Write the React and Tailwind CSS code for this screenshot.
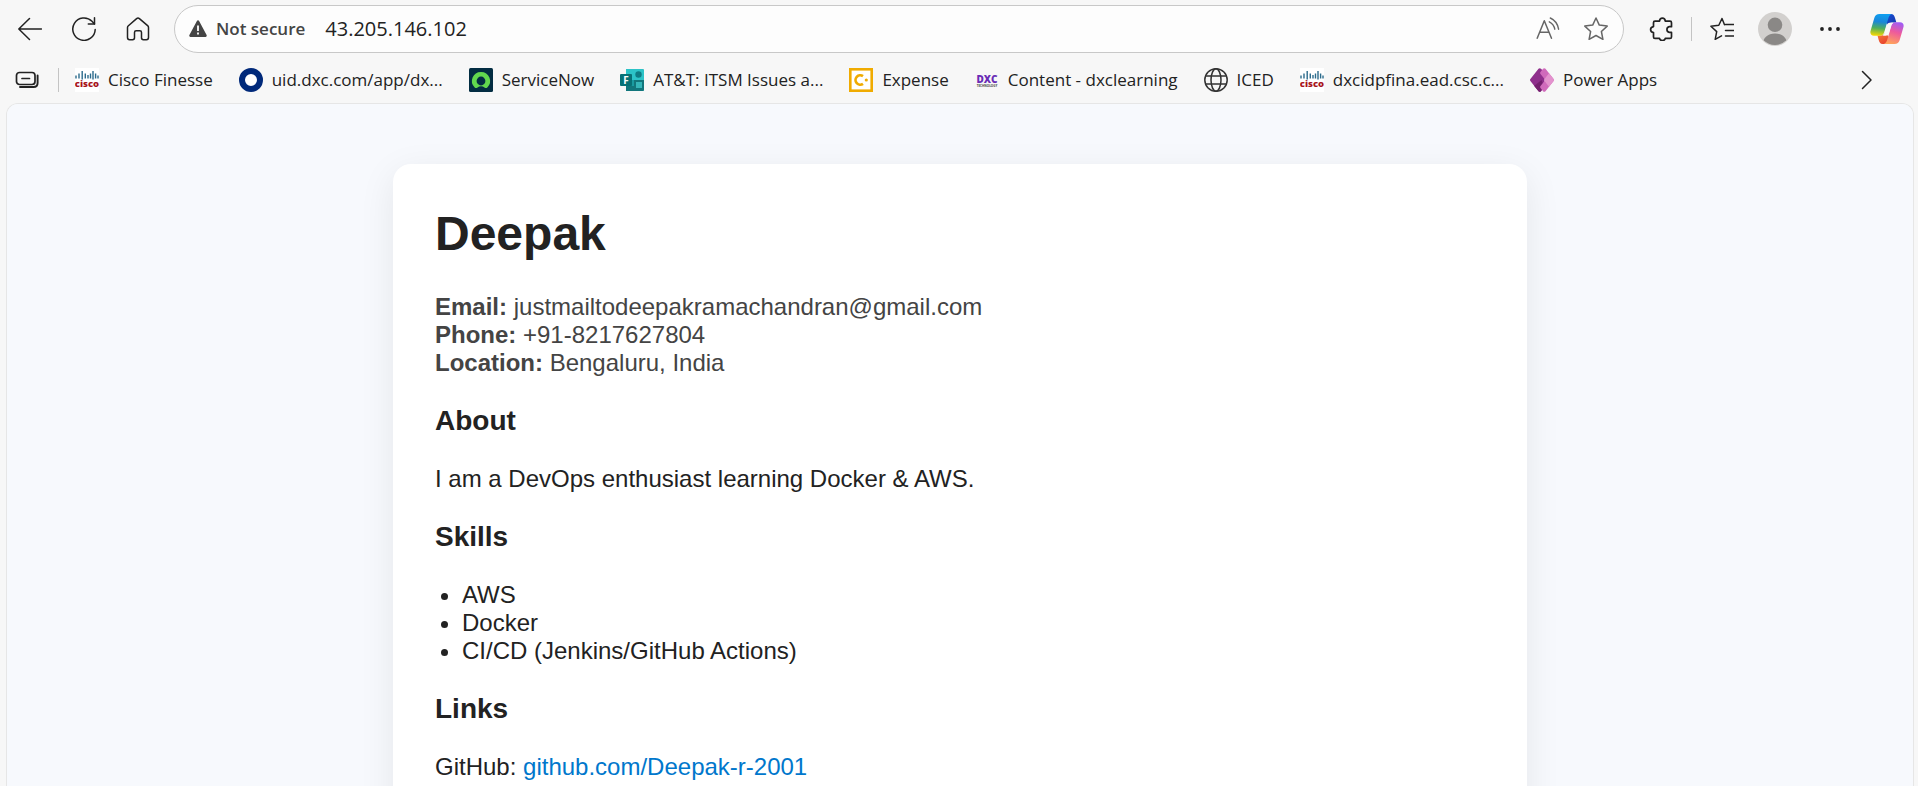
const chromeStroke = { fill: "none", stroke: "currentColor", strokeWidth: 1.5, strokeLinecap: "round", strokeLinejoin: "round" };

function BackIcon() {
  return (
    <svg viewBox="0 0 24 24" className="size-6" {...chromeStroke}>
      <path d="M23.5 12H.8M11.5 1.5.8 12l10.7 10.5" />
    </svg>
  );
}

function ReloadIcon() {
  return (
    <svg viewBox="0 0 24 24" className="size-6" {...chromeStroke}>
      <path d="M23.2 12.5A11.2 11.2 0 1 1 20 4.3L22.5 6.9" />
      <path d="M22.5.8v6.1h-6.2" />
    </svg>
  );
}

function HomeIcon() {
  return (
    <svg viewBox="0 0 24 24" className="size-6" {...chromeStroke}>
      <path d="M10.6 1.6 2.4 8.7c-.6.5-.9 1.2-.9 1.9v10c0 1.2.9 2.1 2.1 2.1h3c1.1 0 1.9-.8 1.9-1.9v-5.3c0-1 .7-1.7 1.7-1.7h3.6c1 0 1.7.7 1.7 1.7v5.3c0 1.1.8 1.9 1.9 1.9h3c1.2 0 2.1-.9 2.1-2.1v-10c0-.7-.3-1.4-.9-1.9l-8.2-7.1a2.1 2.1 0 0 0-2.8 0Z" />
    </svg>
  );
}

function WarningIcon() {
  return (
    <svg viewBox="0 0 18 18" className="size-[18px]">
      <path d="M7.9.9a1.25 1.25 0 0 1 2.2 0l7.5 14.2a1.2 1.2 0 0 1-1.1 1.8h-15a1.2 1.2 0 0 1-1.1-1.8Z" fill="#444" />
      <path d="M8.1 5.500h1.8v5.500H8.1zM8.100 12.500h1.8v1.900H8.100z" fill="#fff" />
    </svg>
  );
}

function ReadAloudIcon() {
  return (
    <svg viewBox="0 0 24 24" className="size-6" {...chromeStroke}>
      <path d="M1.2 21.200 8.300 3.800l7.200 17.400M3.700 15.300h9.200" />
      <path d="M13.300 4.800c3 1.500 4.900 4 5.500 7.400M14.300 1c4.700 2.200 7.500 6 8.300 11.200" strokeWidth="1.400" />
    </svg>
  );
}

function StarIcon() {
  return (
    <svg viewBox="0 0 24 24" className="size-6" {...chromeStroke}>
      <path d="m12 1 3.300 7.100 7.900 1-5.800 5.400 1.500 7.800L12 18.500l-6.900 3.800 1.500-7.800L.8 9.100l7.900-1Z" />
    </svg>
  );
}

function ExtensionIcon() {
  return (
    <svg viewBox="0 0 24 24" className="size-6" {...chromeStroke} strokeWidth="1.700">
      <path d="M6 4.200h4.500c.2-1.900 1.300-3 2.900-3s2.700 1.100 2.900 3h4.700c.9 0 1.500.6 1.500 1.500v4h-2.200a2.900 2.900 0 0 0 0 5.700h2.200v4.500c0 .9-.6 1.500-1.500 1.500h-4.700c-.2 1.200-1.300 2.100-2.900 2.100s-2.700-.9-2.900-2.100H6c-.9 0-1.500-.6-1.500-1.500v-4.300c-1.800-.2-2.900-1.300-2.900-3s1.100-2.800 2.900-3V5.700c0-.9.6-1.500 1.500-1.500Z" />
    </svg>
  );
}

function FavoritesIcon() {
  return (
    <svg viewBox="0 0 24 24" className="size-6" {...chromeStroke}>
      <path d="M14.500 7.700 12 1.500 8.800 8.200l-7.900 1 5.800 5.400-1.500 7.700 6.300-3.400M15.500 7.500H24M15.500 13.500H24M15.500 19H24" />
    </svg>
  );
}

function ProfileIcon() {
  return (
    <svg viewBox="0 0 34 34" className="size-[34px]">
      <defs>
        <clipPath id="avatar"><circle cx="17" cy="17" r="16" /></clipPath>
      </defs>
      <circle cx="17" cy="17" r="17" fill="#d2d0ce" />
      <g clipPath="url(#avatar)" fill="#8a8886">
        <circle cx="17" cy="12.800" r="7.300" />
        <path d="M4.500 34c0-8 5-12.500 12.500-12.500S29.500 26 29.500 34Z" />
      </g>
    </svg>
  );
}

function CopilotIcon() {
  return (
    <svg viewBox="0 0 34 32" className="h-8 w-[34px]">
      <defs>
        <linearGradient id="cpA" x1="0.400" y1="0" x2="0.300" y2="1">
          <stop offset="0" stopColor="#0f9ff0" /><stop offset=".35" stopColor="#1b86d8" /><stop offset=".65" stopColor="#4fae5c" /><stop offset="1" stopColor="#f7d800" />
        </linearGradient>
        <linearGradient id="cpB" x1="0.700" y1="0" x2="0.400" y2="1">
          <stop offset="0" stopColor="#a05cf5" /><stop offset=".45" stopColor="#ee5a9c" /><stop offset="1" stopColor="#ffa35c" />
        </linearGradient>
        <linearGradient id="cpC" x1="0" y1="0" x2="1" y2="1">
          <stop offset="0" stopColor="#1c50d8" /><stop offset="1" stopColor="#1236a8" />
        </linearGradient>
        <linearGradient id="cpD" x1="0" y1="0" x2="0.500" y2="1">
          <stop offset="0" stopColor="#f9803c" /><stop offset="1" stopColor="#e8442e" />
        </linearGradient>
      </defs>
      <path d="M16 1h5c2.300 0 3.300 1.600 4 4l1.400 4.500h-4.600c-2 0-3.200 1-3.900 3L15 8Z" fill="url(#cpC)" />
      <path d="M17.500 31h-5c-2.300 0-3.200-1.700-3.800-4l-1.200-4.500H11c2 0 3.200-1 3.900-3L19 24Z" fill="url(#cpD)" />
      <path d="M9.500 1h12.300c-2 .8-2.900 2.400-3.500 4.500l-4 13.500c-.7 2.400-2 3.700-4.600 3.700H4c-3 0-4.200-2.200-3.400-5L4.300 5C5.100 2.300 6.700 1 9.500 1Z" fill="url(#cpA)" />
      <path d="M24.500 31H13.800c2-.8 2.900-2.400 3.500-4.500l4-13.500c.7-2.400 2-3.700 4.600-3.700H30c3 0 4.200 2.200 3.400 5L29.700 27c-.8 2.700-2.400 4-5.200 4Z" fill="url(#cpB)" />
      <path d="M19.600 9.700h3.700c-1.300.8-1.900 1.900-2.300 3.300l-2 6.700c-.6 2-1.700 3-3.500 3h-3.200c1.300-.8 1.900-1.900 2.300-3.300l2-6.700c.6-2 1.500-3 3-3Z" fill="#f9f7f7" />
    </svg>
  );
}

function WorkspacesIcon() {
  return (
    <svg viewBox="0 0 24 24" className="size-6" fill="none" stroke="#222" strokeLinecap="round" strokeLinejoin="round">
      <rect x="1.500" y="4.500" width="18.500" height="12" rx="3" strokeWidth="1.700" />
      <path d="M7 10.500h7.500" strokeWidth="1.700" />
      <path d="M22.600 7.500v7.500c0 2.500-1.600 4-4 4H5" strokeWidth="1.900" />
    </svg>
  );
}

function CiscoIcon() {
  return (
    <svg viewBox="0 0 24 24" className="size-6" aria-hidden="true">
      <rect width="24" height="24" fill="#fff" />
      <path d="M1 7.500v3M4 5.500v5M7.200 3v8.500M10.300 5.500v5M13 7v3.500M15.500 5.500v5M18 3v8.500M20.600 5.500v5M23 7.500v3" stroke="#2b6b8c" strokeWidth="1.400" />
      <text x="12" y="19.300" textAnchor="middle" fontSize="9.500" fontWeight="800" fill="#a8141c" fontFamily="Open Sans, sans-serif">cisco</text>
    </svg>
  );
}

function RingIcon() {
  return (
    <svg viewBox="0 0 24 24" className="size-6">
      <circle cx="12" cy="12" r="9" fill="#fff" stroke="#00297a" strokeWidth="6" />
    </svg>
  );
}

function ServiceNowIcon() {
  return (
    <svg viewBox="0 0 24 24" className="size-6">
      <rect width="24" height="24" rx="1.500" fill="#032d42" />
      <path d="M12 4a9 9 0 0 0-6.300 15.500c.7.700 1.700.7 2.500.2a6.300 6.300 0 0 1 7.600 0c.8.500 1.800.5 2.500-.2A9 9 0 0 0 12 4Z" fill="#62d84e" />
      <circle cx="12" cy="13" r="4.400" fill="#032d42" />
    </svg>
  );
}

function FormsIcon() {
  return (
    <svg viewBox="0 0 24 24" className="size-6" aria-hidden="true">
      <rect x="6" y="1" width="18" height="22" rx="1.500" fill="#1a9ba1" />
      <path d="M6 1h16.500A1.500 1.500 0 0 1 24 2.500V12H6Z" fill="#2cc3c7" />
      <path d="M14 12h10v9.500a1.500 1.500 0 0 1-1.500 1.500H6v-5h8Z" fill="#12767c" />
      <circle cx="18.500" cy="6.500" r="3.200" fill="#0f7c84" />
      <rect x="16" y="14" width="6" height="6" fill="#35b6b9" />
      <rect y="6" width="12" height="12" rx="1" fill="#077176" />
      <text x="6" y="15.500" textAnchor="middle" fontSize="10" fontWeight="700" fill="#fff" fontFamily="Open Sans, sans-serif">F</text>
    </svg>
  );
}

function ExpenseIcon() {
  return (
    <svg viewBox="0 0 24 24" className="size-6">
      <rect x="1.300" y="1.300" width="21.400" height="21.400" fill="#fff" stroke="#f0ab00" strokeWidth="2.600" />
      <path d="M14 8.200a4.700 4.700 0 1 0 0 7.600" fill="none" stroke="#f0ab00" strokeWidth="2.700" />
      <circle cx="17.300" cy="12" r="1.600" fill="#f0ab00" />
    </svg>
  );
}

function DxcIcon() {
  return (
    <svg viewBox="0 0 24 24" className="size-6" aria-hidden="true">
      <text x="12" y="14.500" textAnchor="middle" fontSize="10" fontWeight="800" fill="#6a2cb5" fontFamily="Open Sans, sans-serif">DXC</text>
      <text x="12" y="19" textAnchor="middle" fontSize="3" fontWeight="700" fill="#444" fontFamily="Open Sans, sans-serif">TECHNOLOGY</text>
    </svg>
  );
}

function GlobeIcon() {
  return (
    <svg viewBox="0 0 24 24" className="size-6" fill="none" stroke="#333" strokeWidth="1.500">
      <circle cx="12" cy="12" r="11.200" />
      <ellipse cx="12" cy="12" rx="5" ry="11.200" />
      <path d="M1.800 8h20.400M1.800 16h20.400" />
    </svg>
  );
}

function PowerAppsIcon() {
  return (
    <svg viewBox="0 0 24 24" className="size-6">
      <path d="M8.500.8c.7-.8 1.800-.8 2.500 0L15 5l-1 14-3 4.200c-.7.800-1.800.8-2.500 0L.4 13a1.500 1.500 0 0 1 0-2Z" fill="#8f2f8c" />
      <path d="m6 16.500 5.500-4.500L14 19l-3 4.200c-.7.800-1.800.8-2.500 0L4 17.700Z" fill="#75206f" />
      <path d="M13 .8c.7-.8 1.800-.8 2.500 0L23.600 11c.5.600.5 1.400 0 2l-8.100 10.200c-.7.800-1.800.8-2.500 0L10.500 20c-.5-.6-.5-1.300 0-1.900l4-5.100c.5-.6.5-1.400 0-2l-4-5.100c-.5-.6-.5-1.300 0-1.900Z" fill="#d06abb" />
      <path d="m19 5.200 4.600 5.800c.5.600.5 1.400 0 2L19 18.800l-4.500-5.800c.5-.6.5-1.400 0-2Z" fill="#e392cd" />
    </svg>
  );
}

function ChevronIcon() {
  return (
    <svg viewBox="0 0 24 24" className="size-6" {...chromeStroke}>
      <path d="m8.500 3.500 8.500 8.500-8.500 8.500" />
    </svg>
  );
}

const bookmarks = [
  { label: "Cisco Finesse", Icon: CiscoIcon },
  { label: "uid.dxc.com/app/dx...", Icon: RingIcon },
  { label: "ServiceNow", Icon: ServiceNowIcon },
  { label: "AT&T: ITSM Issues a...", Icon: FormsIcon },
  { label: "Expense", Icon: ExpenseIcon },
  { label: "Content - dxclearning", Icon: DxcIcon },
  { label: "ICED", Icon: GlobeIcon },
  { label: "dxcidpfina.ead.csc.c...", Icon: CiscoIcon },
  { label: "Power Apps", Icon: PowerAppsIcon },
];

function Toolbar() {
  return (
    <div className="flex items-center pt-[5px] pr-[14px] pl-[18px]">
      <div className="flex items-center gap-[30px]">
        <button type="button" aria-label="Back"><BackIcon /></button>
        <button type="button" aria-label="Refresh"><ReloadIcon /></button>
        <button type="button" aria-label="Home"><HomeIcon /></button>
      </div>
      <div className="ml-6 flex h-12 min-w-0 flex-1 items-center rounded-full border border-[#c8c8c8] bg-[#fdfdfd] pr-[15px] pl-[14px]">
        <button type="button" className="flex shrink-0 items-center gap-[9px] text-[17px] font-semibold text-[#444]">
          <WarningIcon />
          Not secure
        </button>
        <input type="text" aria-label="Address" defaultValue="43.205.146.102" className="ml-5 min-w-0 flex-1 bg-transparent text-[20px] text-[#222] outline-none" />
        <div className="flex items-center gap-6 text-[#666]">
          <button type="button" aria-label="Read aloud"><ReadAloudIcon /></button>
          <button type="button" aria-label="Add to favorites"><StarIcon /></button>
        </div>
      </div>
      <div className="ml-[25px] flex items-center">
        <button type="button" aria-label="Extensions"><ExtensionIcon /></button>
        <span className="mx-[18px] h-6 w-px bg-[#c4c4c4]" />
        <button type="button" aria-label="Favorites"><FavoritesIcon /></button>
        <button type="button" aria-label="Profile" className="ml-6"><ProfileIcon /></button>
        <button type="button" aria-label="Settings and more" className="ml-[26px]">
          <svg viewBox="0 0 24 24" className="size-6" fill="currentColor">
            <circle cx="4" cy="12" r="1.900" /><circle cx="12" cy="12" r="1.900" /><circle cx="20" cy="12" r="1.900" />
          </svg>
        </button>
        <button type="button" aria-label="Copilot" className="ml-7"><CopilotIcon /></button>
      </div>
    </div>
  );
}

function BookmarksBar() {
  return (
    <nav aria-label="Favorites bar" className="flex h-[50px] items-center pt-1 pr-10 pl-[15px]">
      <button type="button" aria-label="Workspaces"><WorkspacesIcon /></button>
      <span className="mr-4 ml-[19px] h-6 w-px bg-[#c4c4c4]" />
      <ul className="flex min-w-0 flex-1 items-center gap-[26px] overflow-hidden">
        {bookmarks.map(({ label, Icon }) => (
          <li key={label} className="shrink-0">
            <a href="#" className="flex items-center gap-[9px] text-[17px] leading-6 whitespace-nowrap text-[#222]">
              <Icon />
              {label}
            </a>
          </li>
        ))}
      </ul>
      <button type="button" aria-label="More favorites"><ChevronIcon /></button>
    </nav>
  );
}

export default function App() {
  return (
    <div className="flex h-screen flex-col overflow-hidden bg-[#f7f7f7] text-[#222]">
      <header className="shrink-0 font-['Open_Sans','Noto_Sans',sans-serif]">
        <Toolbar />
        <BookmarksBar />
      </header>
      <main className="mr-1 ml-1.5 min-h-0 flex-1 overflow-y-auto rounded-t-xl border border-b-0 border-[#e6e6e6] bg-[#f7f9fd] px-6 font-['Liberation_Sans',Arial,sans-serif] text-2xl leading-7 [scrollbar-width:none]">
        <article className="mx-auto my-[60px] max-w-[1134px] rounded-[18px] bg-white p-[42px] shadow-[0_9px_36px_rgba(0,0,0,0.08)]">
          <h1 className="mb-8 text-5xl leading-[55px] font-bold">Deepak</h1>
          <address className="text-[#444] not-italic">
            <p><strong>Email:</strong> justmailtodeepakramachandran@gmail.com</p>
            <p><strong>Phone:</strong> +91-8217627804</p>
            <p><strong>Location:</strong> Bengaluru, India</p>
          </address>
          <h2 className="my-7 text-[28px] leading-8 font-bold">About</h2>
          <p>I am a DevOps enthusiast learning Docker &amp; AWS.</p>
          <h2 className="my-7 text-[28px] leading-8 font-bold">Skills</h2>
          <ul className="list-disc pl-[27px]">
            <li>AWS</li>
            <li>Docker</li>
            <li>CI/CD (Jenkins/GitHub Actions)</li>
          </ul>
          <h2 className="my-7 text-[28px] leading-8 font-bold">Links</h2>
          <p>GitHub: <a href="https://github.com/Deepak-r-2001" className="text-[#0077cc]">github.com/Deepak-r-2001</a></p>
        </article>
      </main>
    </div>
  );
}
